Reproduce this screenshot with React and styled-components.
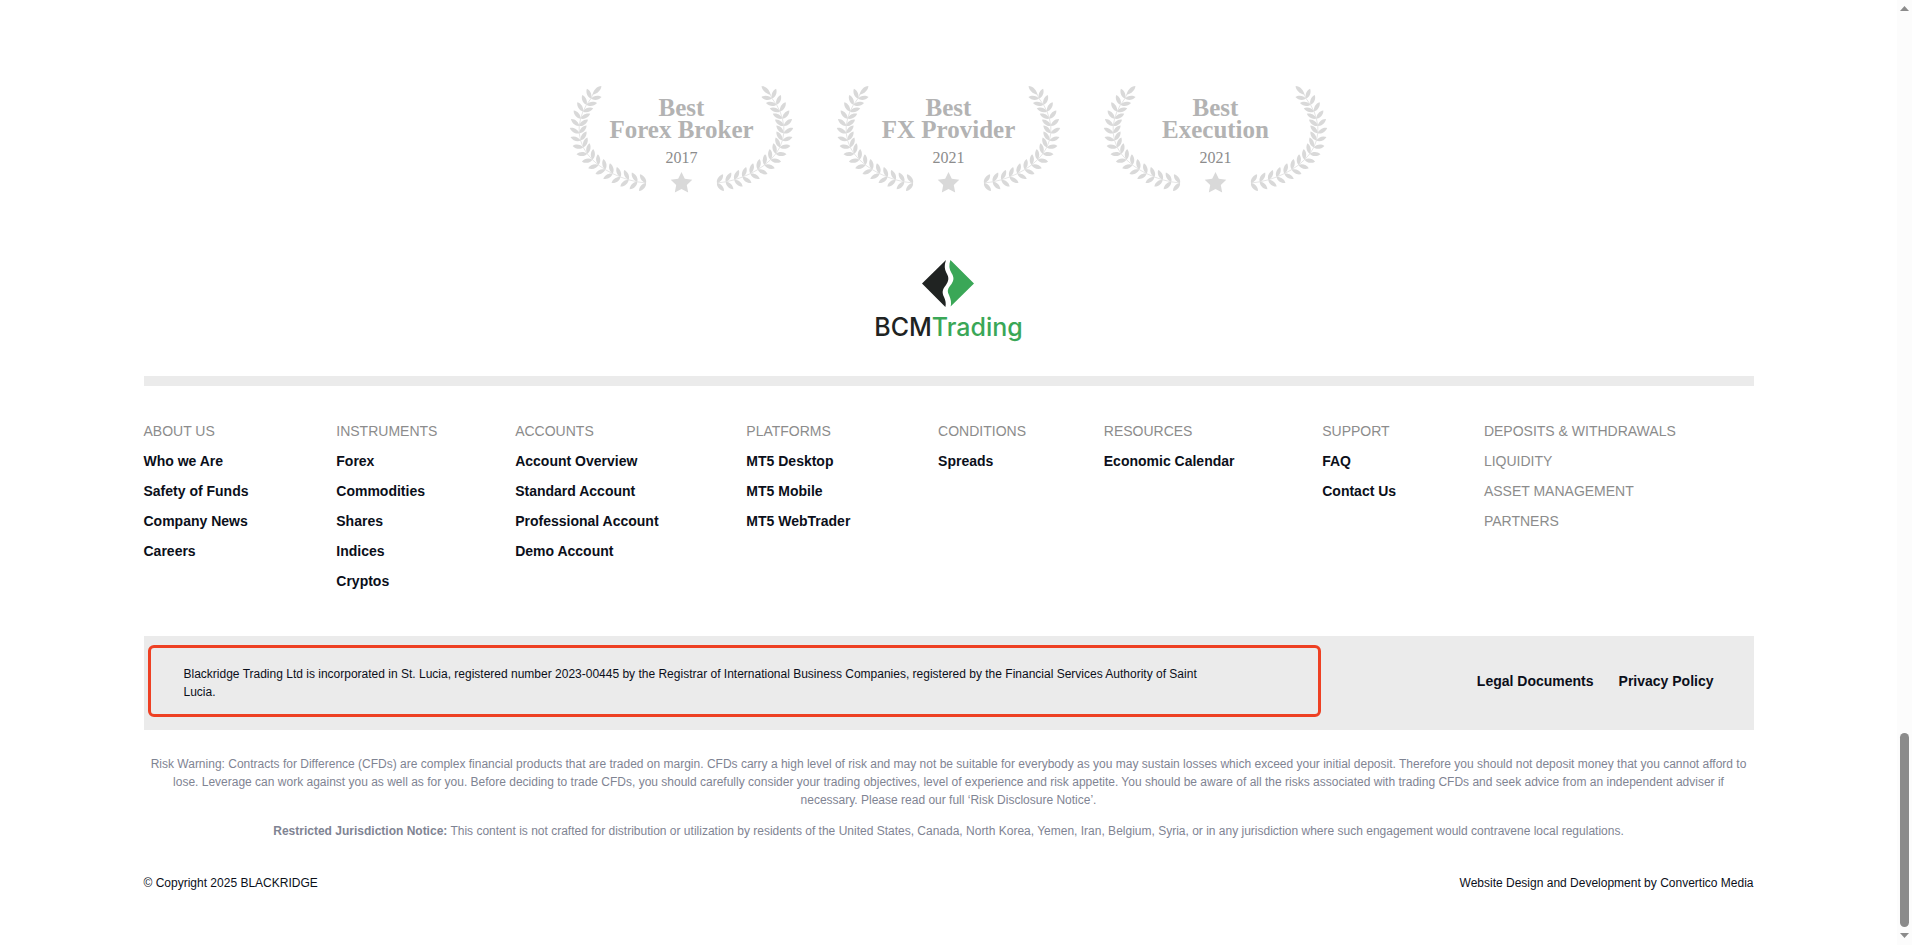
import React from 'react'
import styled, { createGlobalStyle } from 'styled-components'

const awards = [
    { title: 'Forex Broker', year: '2017' },
    { title: 'FX Provider', year: '2021' },
    { title: 'Execution', year: '2021' },
]

const menus = [
    { heads: ['ABOUT US'], links: ['Who we Are', 'Safety of Funds', 'Company News', 'Careers'] },
    { heads: ['INSTRUMENTS'], links: ['Forex', 'Commodities', 'Shares', 'Indices', 'Cryptos'] },
    { heads: ['ACCOUNTS'], links: ['Account Overview', 'Standard Account', 'Professional Account', 'Demo Account'] },
    { heads: ['PLATFORMS'], links: ['MT5 Desktop', 'MT5 Mobile', 'MT5 WebTrader'] },
    { heads: ['CONDITIONS'], links: ['Spreads'] },
    { heads: ['RESOURCES'], links: ['Economic Calendar'] },
    { heads: ['SUPPORT'], links: ['FAQ', 'Contact Us'] },
    { heads: ['DEPOSITS & WITHDRAWALS', 'LIQUIDITY', 'ASSET MANAGEMENT', 'PARTNERS'], links: [] },
]

// points on the stem where a pair of leaves grows, from the top down
const stem = [
    [21, 12.5], [16.5, 18.7], [13, 25.4], [10.6, 32.5], [9.2, 39.8], [9.2, 47.2],
    [10.6, 54.5], [13.2, 61.4], [17.2, 67.8], [22.4, 73.7], [28.4, 79],
    [35.2, 83.6], [42.6, 87.6], [50.4, 91], [58.6, 93.8], [67.2, 95.8], [76, 97],
]
const leaf = 'M0 0C1.6 -2.7 6.8 -4 10.6 -1.4C8 1.9 2.8 2.1 0 0Z'

function Branch() {
    return (
        <g>
            <path d="M22.5 8.8C23.4 4 27 0.2 31.4 0C31.2 4 27.4 7.8 22.5 8.8Z" />
            <polyline
                points={[[23, 8], ...stem].map(p => p.join(',')).join(' ')}
                fill="none"
                stroke="#dedede"
                strokeWidth="0.8"
            />
            {stem.map(([x, y], i) => {
                const next = stem[i - 1] || [24, 7]
                const prev = stem[i + 1] || [84, 97.6]
                const angle = Math.atan2(next[1] - prev[1], next[0] - prev[0]) * 180 / Math.PI
                return (
                    <g key={i}>
                        <path d={leaf} transform={`translate(${x} ${y}) rotate(${angle - 48})`} />
                        <path d={leaf} transform={`translate(${x} ${y}) rotate(${angle + 42}) scale(1 -1)`} />
                    </g>
                )
            })}
        </g>
    )
}

function Laurel() {
    return (
        <svg width="222" height="107" viewBox="1 0 222 107" overflow="visible" fill="#d9d9d9" aria-hidden="true">
            <Branch />
            <g transform="translate(223 0) scale(-1 1)">
                <Branch />
            </g>
            <path d="M111.5 86L114.8 92.8L122.3 93.8L116.8 99.1L118.2 106.6L111.5 103L104.8 106.6L106.2 99.1L100.7 93.8L108.2 92.8Z" />
        </svg>
    )
}

function App() {
    return (
        <Window>
            <GlobalStyle />
            <Footer>
                <Awards>
                    {awards.map(item => (
                        <Award key={item.title}>
                            <Laurel />
                            <AwardText>
                                <h3>Best<br />{item.title}</h3>
                                <p>{item.year}</p>
                            </AwardText>
                        </Award>
                    ))}
                </Awards>

                <Logo href="#">
                    <svg width="54" height="47" viewBox="0 0 54 47" aria-hidden="true">
                        <path fill="#202322" d="M24 0C22 6 22.6 9.5 25 14C27.2 18 26.6 21 24 25C20 30 20 32.5 22 37C23.6 40.5 24.2 43.5 23.4 47L0 23.5Z" />
                        <path fill="#3aa757" d="M28.4 0C26.8 5 27 9 29.5 13C32.2 17.4 32 20.2 29.5 24C25.4 29 25 31 27 35C29 39.4 29.6 43 28.6 46.6L52 23.4Z" />
                    </svg>
                    <LogoName>BCM<span>Trading</span></LogoName>
                </Logo>

                <Divider />

                <Menus>
                    {menus.map(menu => (
                        <Menu key={menu.heads[0]}>
                            {menu.heads.map(head => (
                                <li key={head}><HeadLink href="#">{head}</HeadLink></li>
                            ))}
                            {menu.links.map(link => (
                                <li key={link}><MenuLink href="#">{link}</MenuLink></li>
                            ))}
                        </Menu>
                    ))}
                </Menus>

                <LegalBar>
                    <Company>
                        Blackridge Trading Ltd is incorporated in St. Lucia, registered number 2023-00445 by the Registrar of International Business Companies, registered by the Financial Services Authority of Saint Lucia.
                    </Company>
                    <LegalLinks>
                        <a href="#">Legal Documents</a>
                        <a href="#">Privacy Policy</a>
                    </LegalLinks>
                </LegalBar>

                <Warning>
                    <p>
                        Risk Warning: Contracts for Difference (CFDs) are complex financial products that are traded on margin. CFDs carry a high level of risk and may not be suitable for everybody as you may sustain losses which exceed your initial deposit. Therefore you should not deposit money that you cannot afford to lose. Leverage can work against you as well as for you. Before deciding to trade CFDs, you should carefully consider your trading objectives, level of experience and risk appetite. You should be aware of all the risks associated with trading CFDs and seek advice from an independent adviser if necessary. Please read our full ‘Risk Disclosure Notice’.
                    </p>
                    <p>
                        <strong>Restricted Jurisdiction Notice:</strong> This content is not crafted for distribution or utilization by residents of the United States, Canada, North Korea, Yemen, Iran, Belgium, Syria, or in any jurisdiction where such engagement would contravene local regulations.
                    </p>
                </Warning>

                <Bottom>
                    <p>© Copyright 2025 BLACKRIDGE</p>
                    <p>Website Design and Development by <a href="#">Convertico Media</a></p>
                </Bottom>
            </Footer>

            <Scrollbar aria-hidden="true">
                <svg width="9" height="5" viewBox="0 0 9 5"><path d="M4.5 0L9 5H0Z" /></svg>
                <Thumb />
                <svg width="9" height="5" viewBox="0 0 9 5"><path d="M0 0H9L4.5 5Z" /></svg>
            </Scrollbar>
        </Window>
    )
}

export default App

const GlobalStyle = createGlobalStyle`
*{
    box-sizing:border-box;
    margin:0;
    padding:0;
}
body{
    background-color:white;
    color:#0b0f1a;
    font-family:"Liberation Sans",Arial,sans-serif;
    font-size:12px;
    line-height:18px;
}
a{
    color:inherit;
    text-decoration:none;
}
`;

const Window = styled.div`
display:flex;
min-height:100vh;
`;

const Footer = styled.footer`
flex:1;
min-width:0;
max-width:1610px;
display:flex;
flex-direction:column;
margin:0 auto;
padding-top:86px;
`;

const Awards = styled.div`
display:flex;
justify-content:center;
gap:45px;
`;

const Award = styled.div`
display:grid;
>*{
    grid-area:1 / 1;
}
`;

const AwardText = styled.div`
padding-top:11px;
text-align:center;
font-family:"Liberation Serif","Times New Roman",serif;
h3{
    font-size:25px;
    line-height:22px;
    color:#b3b3b3;
}
p{
    margin-top:8px;
    font-size:16px;
    color:#8c8c8c;
}
`;

const Logo = styled.a`
display:flex;
flex-direction:column;
align-items:center;
align-self:center;
gap:5px;
margin-top:67px;
`;

const LogoName = styled.span`
font-family:Inter,sans-serif;
font-size:25px;
font-weight:500;
line-height:30px;
color:#202322;
span{
    color:#3aa757;
}
`;

const Divider = styled.hr`
height:10px;
margin-top:34px;
border:none;
background-color:#ebebeb;
`;

const Menus = styled.nav`
display:flex;
margin-top:30px;
`;

const Menu = styled.ul`
flex:1 1 auto;
list-style:none;
font-size:14px;
line-height:30px;
white-space:nowrap;
`;

const HeadLink = styled.a`
color:#8c8c8c;
`;

const MenuLink = styled.a`
padding-right:10px;
font-weight:bold;
`;

const LegalBar = styled.div`
display:flex;
align-items:center;
margin-top:40px;
padding:9px 40px 13px 4px;
background-color:#ebebeb;
`;

const Company = styled.p`
flex:1;
padding:17px 96px 13px 33px;
border:3px solid #ee4023;
border-radius:6px;
`;

const LegalLinks = styled.div`
display:flex;
gap:25px;
margin-left:156px;
font-size:14px;
font-weight:bold;
white-space:nowrap;
`;

const Warning = styled.div`
display:flex;
flex-direction:column;
gap:13px;
margin-top:25px;
text-align:center;
color:#7f8493;
`;

const Bottom = styled.div`
display:flex;
justify-content:space-between;
margin-top:34px;
`;

const Scrollbar = styled.div`
position:sticky;
top:0;
display:flex;
flex-direction:column;
align-items:center;
gap:6px;
width:15px;
height:100vh;
padding:6px 3px 7px;
background-color:#fcfcfc;
svg{
    fill:#8b8b8b;
}
`;

const Thumb = styled.div`
width:9px;
height:194px;
margin-top:auto;
border-radius:5px;
background-color:#8b8b8b;
`;
